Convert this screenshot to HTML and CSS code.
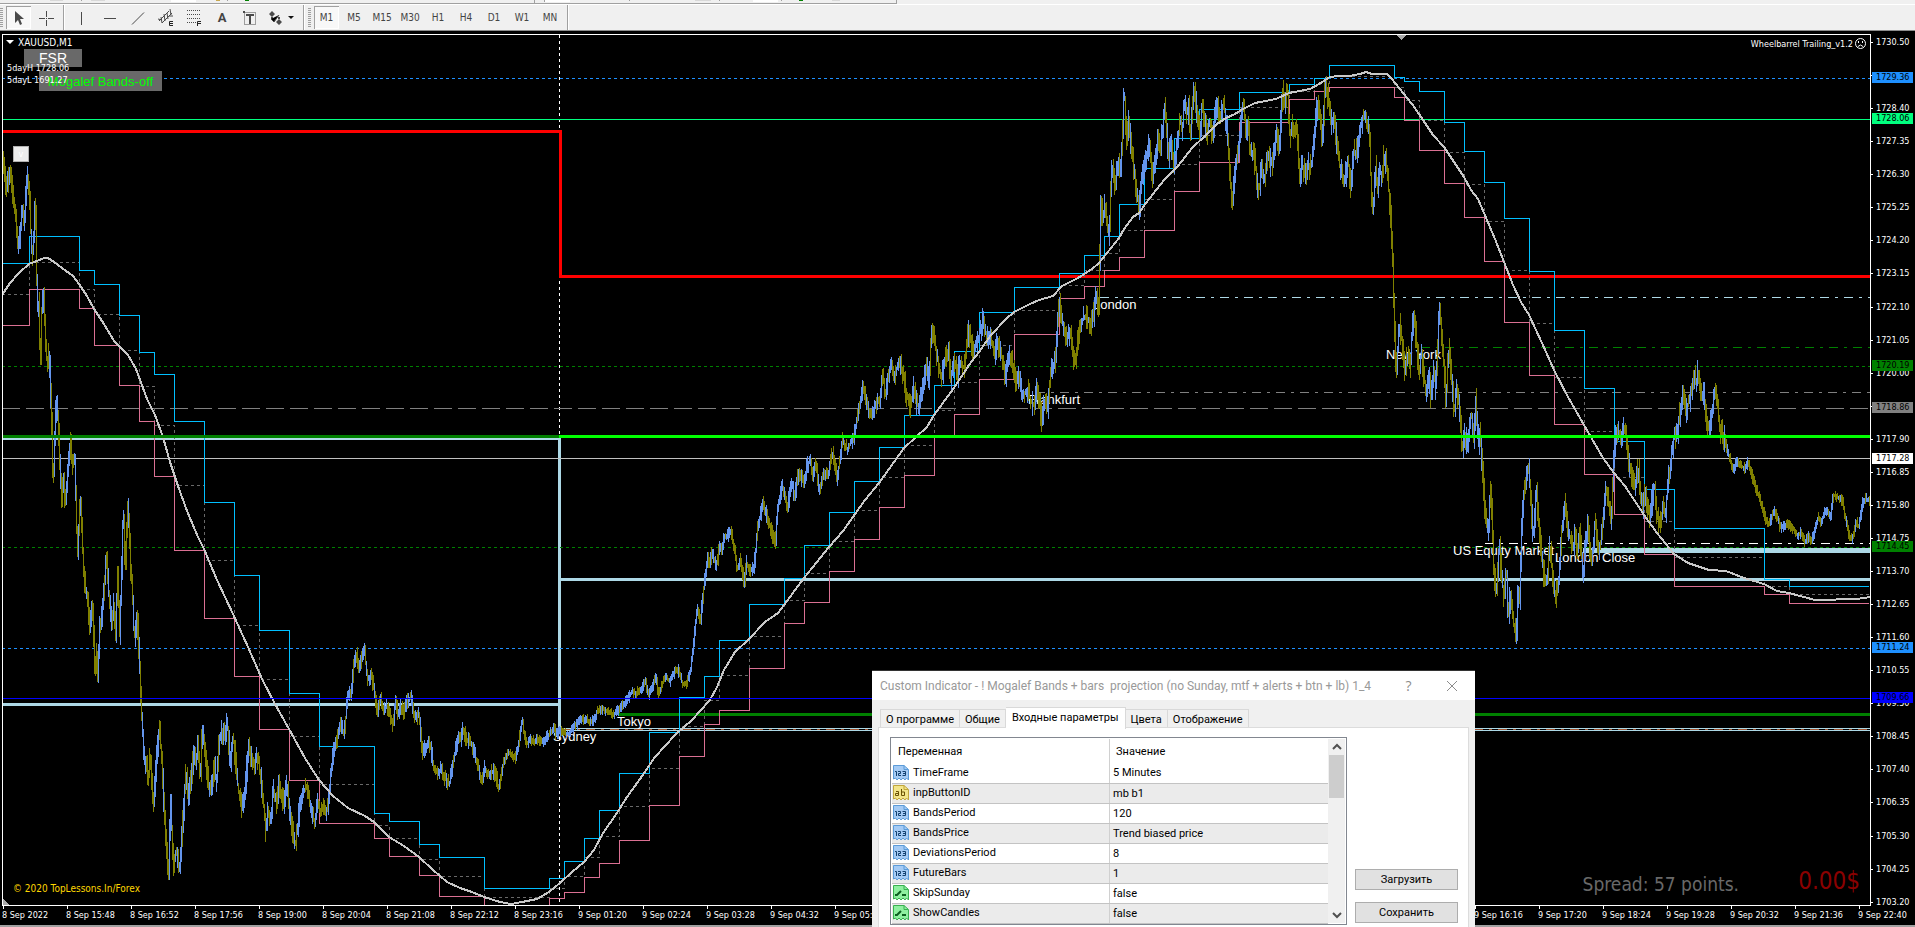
FILE: index.html
```html
<!DOCTYPE html>
<html lang="ru">
<head>
<meta charset="utf-8">
<title>XAUUSD,M1</title>
<link rel="stylesheet" href="styles.css">
</head>
<body>
<header class="bars">
  <div class="strip">
    <svg width="896" height="3" viewBox="0 0 896 3" aria-hidden="true">
      <path fill="#fff" d="M171 0h25v2h-25zM545 0h25v2h-25zM753 0h25v2h-25z"/>
      <path fill="#a0a0a0" d="M81 0h1v1h-1zM227 0h1v1h-1zM534 0h1v3h-1zM544 0h1v2h-1zM629 0h1v1h-1zM719 0h1v1h-1zM781 0h1v1h-1z"/>
      <path fill="#d8d8d8" d="M50 0h13v1h-13zM91 0h14v1h-14zM695 0h16v1h-16zM832 0h8v1h-8z"/>
      <path fill="#008000" d="M245 0h4v1h-4zM799 0h4v1h-4z"/>
      <path fill="#c8a850" d="M216 0h4v1h-4z"/>
    </svg>
  </div>
  <div class="toolbar">
    <span class="grip"></span>
    <button class="tool pressed" aria-label="Cursor"><svg width="16" height="16"><path fill="#4a4a4a" d="M4 1v12l3-3 2 5 2-1-2-5h4z"/></svg></button>
    <button class="tool" aria-label="Crosshair"><svg width="16" height="16"><path stroke="#4a4a4a" d="M8.500 1v6M8.500 10v6M1 8.500h6M10 8.500h6M8 8.500h1"/></svg></button>
    <span class="sep"></span>
    <button class="tool" aria-label="Vertical line"><svg width="16" height="16"><path stroke="#4a4a4a" d="M7.500 2v13"/></svg></button>
    <button class="tool" aria-label="Horizontal line"><svg width="16" height="16"><path stroke="#4a4a4a" d="M2 8.500h12"/></svg></button>
    <button class="tool" aria-label="Trendline"><svg width="16" height="16"><path stroke="#4a4a4a" d="M2 14.500L14 2.500"/></svg></button>
    <button class="tool" aria-label="Equidistant channel"><svg width="16" height="17"><path stroke="#4a4a4a" fill="none" d="M1 12L11 2M4 14L14 4M3 8l1 6M6 5l1 7M9 4l1 6M12 0l1 6M0 10l4 1M11 7h4"/><path stroke="#222" fill="none" d="M15 12.500h-3.500v4H15M12 14.500h3"/></svg></button>
    <button class="tool" aria-label="Fibonacci retracement"><svg width="16" height="17"><path stroke="#4a4a4a" stroke-dasharray="1 1" d="M1 1.500h14M1 5.500h14M1 9.500h14M1 13.500h9"/><path stroke="#222" fill="none" d="M15 12.500h-3.500V17M12 14.500h3"/></svg></button>
    <button class="tool letter">A</button>
    <button class="tool" aria-label="Text label"><svg width="16" height="16"><rect x="2.500" y="2.500" width="11" height="12" fill="none" stroke="#4a4a4a" stroke-dasharray="1 1"/><path fill="#4a4a4a" d="M1 1h2v2h-2zM4 4h8v2h-3v8h-2v-8h-3z"/></svg></button>
    <button class="tool arrows" aria-label="Arrows"><svg width="28" height="16"><path fill="#4a4a4a" d="M4 1l3 3-3 3-3-3zM3 7h2v2h-2zM11 9l3 3-3 3-3-3zM10 7h2v2h-2z"/><path fill="#111" d="M20 6h6l-3 3z"/><path stroke="#4a4a4a" d="M3 9l3 3 5-7"/></svg></button>
    <span class="sep"></span>
    <span class="grip"></span>
    <nav class="frames" id="frames"></nav>
    <span class="sep"></span>
  </div>
</header>

<main class="chart">
  <section class="plot">
    <svg class="canvas" id="canvas" aria-hidden="true"><g id="scene" transform="translate(-3 -35)"></g></svg>
    <div class="note symbol"><i class="drop"></i>XAUUSD,M1</div>
    <button class="tag-btn fsr">FSR</button>
    <button class="tag-btn mogalef">Mogalef Bands-off</button>
    <div class="note days">5dayH 1728.06<br>5dayL 1691.27</div>
    <button class="toggle">v</button>
    <div class="note expert">Wheelbarrel Trailing_v1.2
      <svg width="11" height="11"><circle cx="5.500" cy="5.500" r="5" fill="none" stroke="#fff"/><path stroke="#fff" fill="none" d="M3 8.500q2.500-3 5 0M3.500 3v2M7.500 3v2"/></svg>
    </div>
    <div class="note credit">© 2020 TopLessons.In/Forex</div>
    <div class="spread">Spread: 57 points.</div>
    <div class="profit">0.00$</div>
  </section>
  <aside class="prices" id="prices"></aside>
  <footer class="times" id="times"></footer>
</main>

<section class="dialog" role="dialog" aria-labelledby="dlg-title">
  <div class="titlebar">
    <h1 id="dlg-title">Custom Indicator - ! Mogalef Bands + bars&nbsp; projection (no Sunday, mtf + alerts + btn + lb) 1_4</h1>
    <button class="win help">?</button>
    <button class="win" aria-label="Close"><svg width="12" height="12"><path stroke="#8c8c8c" d="M1 1l10 10M11 1L1 11"/></svg></button>
  </div>
  <div class="tabs" role="tablist">
    <button role="tab">О программе</button><button role="tab">Общие</button><button role="tab" class="active" aria-selected="true">Входные параметры</button><button role="tab">Цвета</button><button role="tab">Отображение</button>
  </div>
  <div class="panel">
    <div class="grid">
      <table>
        <thead><tr><th>Переменная</th><th>Значение</th></tr></thead>
        <tbody id="params"></tbody>
      </table>
      <div class="scroll">
        <svg width="10" height="16"><path fill="none" stroke="#505050" stroke-width="2" d="M1 10l4-4 4 4"/></svg>
        <i class="thumb"></i>
        <svg width="10" height="16"><path fill="none" stroke="#505050" stroke-width="2" d="M1 6l4 4 4-4"/></svg>
      </div>
    </div>
    <div class="actions">
      <button>Загрузить</button>
      <button>Сохранить</button>
    </div>
  </div>
</section>
<script src="chart.js"></script>
</body>
</html>
```
FILE: styles.css
```css
* { box-sizing: border-box; }
body {
  margin: 0;
  height: 100vh;
  display: flex;
  flex-direction: column;
  overflow: hidden;
  background: #000;
  font-family: Roboto, "Liberation Sans", sans-serif;
  font-size: 11px;
}
button { font: inherit; padding: 0; border: 0; background: none; color: inherit; }

/* toolbars */
.bars { background: #f0f0f0; border-bottom: 1px solid #8c8c8c; box-shadow: 0 1px 0 #505050; flex: none; }
.strip { width: 897px; height: 4px; border-bottom: 1px solid #a0a0a0; border-right: 1px solid #a0a0a0; }
.strip svg { display: block; }
.toolbar { height: 26px; display: flex; align-items: stretch; border-top: 1px solid #fff; color: #444; }
.grip { width: 3px; margin: 3px 0; background: repeating-linear-gradient(#a0a0a0 0 1px, #f0f0f0 1px 2px); }
.tool { width: 28px; display: flex; align-items: center; justify-content: center; }
.tool svg { display: block; }
.pressed { background: #f8f8f8; box-shadow: inset 1px 1px 0 #a0a0a0, inset -1px -1px 0 #fff; margin: 1px 1px 1px 3px; width: 25px; }
.letter { font-weight: bold; font-size: 13px; }
.arrows { width: 36px; }
.sep { width: 2px; margin: 0 3px; background: linear-gradient(90deg, #a0a0a0 50%, #fff 50%); }
.frames { display: flex; }
.frames .tool { font: 10px "DejaVu Sans Condensed", sans-serif; }

/* chart */
.chart {
  flex: 1;
  min-height: 0;
  display: grid;
  grid-template-columns: 1fr 44px;
  grid-template-rows: 1fr 21px;
  color: #fff;
  border-top: 1px solid #000;
  font: 9px/12px "DejaVu Sans Condensed", "Noto Sans", sans-serif;
}
.plot { position: relative; overflow: hidden; margin: 2px 0 0 2px; border: 1px solid #fff; }
.canvas { position: absolute; inset: 0; width: 100%; height: 100%; shape-rendering: crispEdges; }
.canvas text { font: 13px "Liberation Sans", Arial, sans-serif; fill: #fff; }
.note { position: absolute; white-space: nowrap; }
.symbol { left: 3px; top: 2px; font-size: 10px; }
.drop { display: inline-block; border: 4px solid transparent; border-top-color: #fff; border-bottom: 0; margin: 0 4px 2px 0; }
.days { left: 4px; top: 27px; }
.tag-btn { position: absolute; background: #696969; color: #fff; font: 14px "Liberation Sans", Arial, sans-serif; }
.fsr { left: 21px; top: 14px; width: 58px; height: 18px; }
.mogalef { left: 36px; top: 36px; width: 123px; height: 20px; color: #0f0; font-size: 13px; }
.toggle { position: absolute; left: 10px; top: 111px; width: 16px; height: 16px; background: #ececec; border: 1px solid #b0b0b0; color: #fff; }
.expert { right: 4px; top: 3px; display: flex; gap: 2px; }
.credit { left: 10px; bottom: 10px; color: #ffd700; font-size: 10px; }
.spread, .profit { position: absolute; }
.spread { right: 131px; bottom: 10px; font-size: 19px; line-height: 22px; color: #696969; }
.profit { right: 10px; bottom: 9px; font-size: 24px; line-height: 30px; color: #8b0000; }

.prices { position: relative; display: flex; flex-direction: column; justify-content: space-between; padding: 4px 0 0; margin-bottom: -2px; }
.prices span { height: 12px; padding-left: 5px; position: relative; }
.prices span::before { content: ""; position: absolute; left: 0; top: 6px; width: 2px; height: 1px; background: #fff; }
.prices b { position: absolute; left: 1px; width: 41px; height: 11px; line-height: 11px; padding-left: 4px; font-weight: normal; color: #000; z-index: 1; }
.times { grid-column: 1 / 3; display: flex; padding-left: 2px; border-bottom: 2px solid #a0a0a0; white-space: nowrap; overflow: hidden; }
.times span { flex: 0 0 64px; padding-top: 3px; position: relative; }
.times span::before { content: ""; position: absolute; left: 1px; top: 0; width: 1px; height: 3px; background: #fff; }

/* dialog */
.dialog { position: absolute; left: 872px; top: 670px; bottom: 0; width: 603px; overflow: hidden; background: #f0f0f0; color: #000; border-top: 1px solid #333; display: flex; flex-direction: column; }
.titlebar { height: 29px; flex: none; background: #fff; display: flex; align-items: center; padding: 0 17px 0 8px; }
.titlebar h1 { margin: 0; flex: 1; font: 12px Roboto, sans-serif; color: #999; white-space: nowrap; }
.win { width: 12px; margin-left: 33px; color: #8c8c8c; display: flex; justify-content: center; }
.help { font: 14px "Open Sans", sans-serif; }
.tabs { display: flex; flex: none; align-items: flex-end; height: 28px; padding-left: 8px; }
.tabs button { height: 19px; padding: 0 5px; border: 1px solid #d9d9d9; border-bottom: 0; border-left-width: 0; white-space: nowrap; }
.tabs button:first-child { border-left-width: 1px; }
.tabs .active { height: 22px; padding: 0 6px 2px; background: #fff; margin-bottom: -1px; position: relative; }
.panel { margin: -1px 6px 0; flex: 1; min-height: 0; background: #fff; border: 1px solid #dcdcdc; border-bottom: 0; display: flex; gap: 8px; padding: 9px 10px 0 11px; }
.grid { flex: 1; height: 188px; border: 1px solid #828790; padding: 1px; display: flex; }
table { flex: 1; border-collapse: collapse; table-layout: fixed; }
th { height: 24px; font-weight: normal; text-align: left; padding: 0 6px; }
th + th, td + td { border-left: 1px solid #d0d0d0; width: 219px; }
td { height: 20px; padding: 0 3px; border-bottom: 1px solid #c3c3c3; }
th:first-child, td:first-child { width: 218px; }
td:first-child { padding-left: 1px; }
td svg { vertical-align: middle; margin-right: 4px; }
tbody tr:nth-child(even) { background: #ebebeb; }
.scroll { width: 17px; background: #f0f0f0; display: flex; flex-direction: column; align-items: center; }
.scroll svg { flex: none; }
.thumb { width: 15px; height: 43px; background: #cdcdcd; margin-bottom: auto; }
.actions { width: 103px; padding-top: 132px; display: flex; flex-direction: column; gap: 12px; }
.actions button { height: 21px; background: #e1e1e1; border: 1px solid #adadad; flex: none; }
```
FILE: chart.js
```js
const NS = "http://www.w3.org/2000/svg";
const scene = document.getElementById("scene");

function draw(tag, attrs, text) {
  const el = document.createElementNS(NS, tag);
  for (const k in attrs) el.setAttribute(k, attrs[k]);
  if (text) el.textContent = text;
  scene.appendChild(el);
}
function stroke(d, color, width, dash) {
  draw("path", { d, fill: "none", stroke: color, "stroke-width": width || 1, "stroke-dasharray": dash || "none" });
}
const FAR = 4000;
const DOT = "3 3", DASHDOT = "9 6 3 6";

/* pivot levels */
stroke("M559.5 35V905", "#fff", 1, DOT);
stroke("M2 439H559", "#add8e6", 2);
stroke("M559.5 438V728", "#add8e6", 3);
stroke("M2 704.5H559M560 579.5H" + FAR, "#add8e6", 3);
stroke("M559 728.5H" + FAR + "M559 730.5H" + FAR, "#add8e6");
stroke("M562 729.5H" + FAR, "#a0522d", 1, DASHDOT);
stroke("M2 131.5H560V276.5H" + FAR, "#f00", 3);
stroke("M618 714.5H" + FAR, "#008000", 3);
stroke("M2 458.5H" + FAR, "#c0c0c0");
stroke("M2 408.5H" + FAR, "#808080", 1, "18 6");
stroke("M2 78.5H" + FAR + "M2 648.5H" + FAR, "#1e90ff", 1, DOT);
stroke("M2 366.5H" + FAR + "M2 547.5H" + FAR, "#008000", 1, DOT);
stroke("M2 119.5H" + FAR, "#00ff7f");
stroke("M1100 297.5H" + FAR, "#add8e6", 1, DASHDOT);
stroke("M1421 347.5H" + FAR, "#008000", 1, DASHDOT);
stroke("M1036 392.5H" + FAR, "#808080", 1, DASHDOT);
stroke("M1485 543.5H" + FAR, "#fff", 1, DASHDOT);
stroke("M1583 550.5H" + FAR, "#add8e6", 5);

/* sessions */
[["Sydney", 553, 741], ["Tokyo", 617, 726], ["Frankfurt", 1028, 404], ["London", 1093, 309],
 ["New York", 1386, 359], ["US Equity Market", 1453, 555], ["London Close", 1555, 562]]
  .forEach(([t, x, y]) => draw("text", { x, y }, t));

/* stepped bands: start x, upper y, lower y */
const bands = [
  [2,263,325],[29,236,289],[79,270,308],[94,284,345],[119,315,385],[139,352,421],[154,374,476],[174,421,550],
  [204,502,618],[234,575,676],[259,630,729],[289,693,780],[319,746,823],[374,813,838],[389,821,856],[419,844,875],
  [439,857,896],[484,888,907],[549,878,898],[564,861,892],[584,838,877],[599,810,863],[619,773,840],[649,732,805],
  [679,697,756],[704,676,724],[719,640,710],[749,604,668],[784,578,623],[804,545,602],[829,512,571],[854,481,539],
  [879,447,507],[904,415,475],[934,385,435],[954,351,414],[979,312,379],[1014,287,334],[1059,273,298],[1084,255,286],
  [1104,236,270],[1119,204,257],[1144,168,230],[1174,138,191],[1199,109,162],[1239,92,122],[1289,84,99],[1314,78,91],
  [1329,65,87],[1394,77,97],[1404,81,120],[1419,91,150],[1444,122,183],[1464,151,217],[1484,182,261],[1504,218,322],
  [1529,271,375],[1554,330,424],[1584,388,474],[1614,441,514],[1644,489,554],[1674,528,586],[1764,579,594],[1789,586,603],
];
function steps(pick) {
  let d = "";
  bands.forEach((b, i) => {
    const y = Math.floor(pick(b)) + 0.5;
    d += (i ? "V" : "M" + b[0] + " ") + y + "H" + (i + 1 < bands.length ? bands[i + 1][0] + 0.5 : 1869);
  });
  return d;
}
stroke(steps(b => (b[1] + b[2]) / 2), "#696969", 1, DOT);
stroke(steps(b => b[1]), "#00bfff");
stroke(steps(b => b[2]), "#db7093");

/* price path, one bar per pixel */
const price = [
  2,148,4,165,6,190,9,175,12,185,14,208,16,220,18,252,20,235,22,205,24,222,27,175,29,190,31,245,33,255,35,195,36,240,37,310,
  39,300,40,385,41,320,43,290,44,310,45,335,47,365,49,350,51,410,52,440,53,495,54,450,56,400,58,420,60,470,62,510,63,470,
  65,510,66,490,68,460,70,440,72,470,74,450,76,500,77,560,79,520,80,490,82,530,83,570,85,590,87,600,90,628,92,600,95,675,
  97,650,98,690,99,620,101,620,104,590,106,555,108,590,111,625,114,600,115,648,118,560,119,648,121,590,123,505,125,570,128,500,
  130,560,132,590,134,640,137,615,139,660,141,705,144,765,146,755,148,778,150,750,153,806,156,765,159,725,162,770,164,810,
  167,860,169,875,170,790,172,840,173,870,176,850,179,872,182,830,184,800,186,770,188,798,191,780,193,755,196,758,198,745,
  200,785,202,725,205,755,208,780,210,796,214,765,216,783,219,738,222,730,225,740,227,722,230,765,233,735,236,770,238,790,
  242,810,245,790,248,748,251,757,255,762,258,758,261,782,264,810,266,834,268,805,270,828,273,790,276,803,279,785,283,803,
  287,783,290,820,295,846,298,820,302,795,306,786,309,800,313,818,315,822,317,798,320,814,323,805,325,816,328,805,330,780,
  332,760,334,747,337,740,340,722,344,735,347,700,349,690,351,693,353,670,356,650,358,668,361,660,364,646,367,680,371,675,
  374,690,377,715,380,697,383,710,387,706,391,722,393,724,395,702,398,714,401,705,403,713,406,702,411,697,414,718,419,716,
  422,755,425,747,430,744,433,765,437,774,441,769,445,779,449,785,452,766,456,747,458,733,461,740,463,727,466,740,470,742,
  473,750,476,760,479,770,481,785,484,767,488,776,492,771,496,775,498,791,502,767,506,756,509,753,512,757,515,759,518,746,
  522,718,524,735,527,744,530,739,534,742,538,739,542,743,547,736,551,731,554,727,556,735,560,731,565,734,570,732,575,726,
  580,721,585,719,592,722,597,712,602,709,608,712,614,714,618,710,622,705,627,700,631,692,635,693,640,690,645,681,648,696,
  656,677,658,696,665,676,669,682,677,668,682,683,686,684,690,673,693,647,697,605,700,622,704,583,707,560,710,567,711,553,
  716,565,720,543,722,551,724,538,731,531,735,555,737,571,740,558,744,586,746,562,749,571,754,565,757,533,762,503,767,517,
  771,530,775,544,778,503,782,485,787,507,792,480,794,499,798,475,804,481,807,465,811,460,812,478,816,465,819,491,824,471,
  828,475,832,450,837,480,842,440,847,449,853,438,855,430,859,405,863,385,867,406,871,418,878,398,880,402,882,370,885,395,
  889,373,892,363,894,381,898,361,902,370,905,387,910,410,913,387,918,408,922,390,926,369,929,379,931,327,935,347,941,379,
  944,363,949,346,950,384,954,360,957,376,960,364,964,368,968,331,973,348,978,338,983,320,987,342,989,332,994,354,997,344,
  1002,358,1005,377,1009,353,1013,370,1015,381,1018,376,1022,395,1027,389,1031,402,1035,406,1036,390,1040,400,1041,430,
  1044,399,1047,413,1050,378,1055,357,1057,333,1059,299,1062,323,1067,339,1070,329,1074,368,1079,329,1084,316,1088,320,
  1092,324,1095,304,1096,294,1099,312,1100,204,1103,220,1105,204,1109,240,1111,173,1113,167,1115,187,1118,160,1120,177,
  1122,147,1124,84,1125,113,1126,140,1129,119,1131,147,1134,173,1136,190,1139,209,1142,174,1146,154,1149,144,1152,180,
  1155,160,1157,140,1160,152,1165,104,1168,160,1170,145,1174,162,1178,140,1180,112,1182,135,1184,100,1187,117,1189,105,
  1190,148,1193,92,1195,94,1197,116,1200,132,1202,101,1205,125,1207,135,1209,119,1213,138,1215,113,1218,108,1221,116,1223,102,
  1227,127,1229,168,1232,205,1234,180,1238,150,1240,129,1243,101,1246,129,1248,122,1250,154,1253,151,1256,172,1257,187,
  1260,187,1261,163,1264,178,1268,155,1271,165,1274,153,1276,127,1279,148,1282,90,1285,107,1287,85,1290,145,1291,123,
  1294,132,1297,124,1299,183,1302,163,1305,180,1307,165,1311,166,1314,140,1317,101,1320,117,1322,139,1325,87,1328,98,
  1331,125,1334,114,1337,150,1340,169,1344,183,1348,160,1351,195,1353,150,1356,155,1360,129,1363,114,1369,127,1371,188,
  1373,215,1375,161,1377,189,1380,168,1381,180,1384,154,1386,163,1390,207,1392,247,1394,313,1396,378,1399,322,1402,343,
  1405,373,1407,352,1410,367,1412,325,1414,318,1417,350,1419,379,1421,350,1424,380,1426,393,1428,372,1431,399,1434,366,
  1435,396,1438,337,1439,303,1442,343,1444,372,1446,402,1448,348,1452,380,1454,418,1456,386,1459,407,1462,450,1464,432,
  1467,450,1471,410,1474,446,1475,393,1478,446,1480,432,1483,483,1485,515,1488,535,1490,487,1492,517,1493,560,1496,598,
  1499,542,1501,575,1504,598,1506,562,1508,623,1510,592,1512,613,1516,643,1518,583,1520,605,1521,530,1523,500,1525,485,
  1528,463,1531,507,1533,542,1536,488,1538,517,1540,545,1543,570,1546,588,1550,541,1552,575,1555,600,1559,577,1561,535,
  1565,502,1568,538,1570,537,1573,550,1575,533,1577,550,1579,530,1581,550,1583,578,1585,542,1588,524,1590,562,1593,548,
  1595,521,1598,548,1600,547,1603,517,1605,487,1608,500,1611,526,1613,467,1615,443,1617,427,1621,438,1624,424,1626,437,
  1629,467,1631,472,1635,484,1638,467,1641,502,1643,508,1645,495,1650,516,1654,481,1656,510,1660,529,1663,503,1665,516,
  1668,480,1672,450,1674,435,1677,437,1679,417,1683,393,1686,416,1687,407,1690,397,1694,373,1696,382,1698,371,1701,397,
  1704,392,1705,415,1709,430,1712,412,1714,392,1717,402,1720,431,1723,434,1726,447,1730,460,1733,469,1737,460,1741,466,
  1745,468,1748,461,1752,477,1757,492,1762,507,1766,522,1770,522,1773,510,1777,517,1780,528,1787,524,1792,527,1797,535,
  1801,533,1805,543,1809,536,1811,543,1815,530,1818,517,1821,522,1825,509,1830,518,1833,495,1838,497,1842,500,1846,523,
  1849,535,1852,540,1856,519,1858,530,1862,504,1865,498,1869,500,
];
let k = 0;
function priceAt(x) {
  while (k + 2 < price.length - 2 && price[k + 2] < x) k += 2;
  while (k > 0 && price[k] > x) k -= 2;
  const t = (x - price[k]) / (price[k + 2] - price[k]);
  return price[k + 1] + t * (price[k + 3] - price[k + 1]);
}
let seed = 7;
const rnd = () => (seed = (seed * 16807) % 2147483647) / 2147483647;
let up = "", down = "";
for (let x = 3; x < 1870; x++) {
  const a = priceAt(x - 0.5), b = priceAt(x + 0.5);
  const calm = x > 500 && x < 700 || x > 1725 ? 5 : x > 300 && x < 900 ? 8 : 13;
  const top = Math.round(Math.min(a, b) - 1 - rnd() * calm);
  const bottom = Math.round(Math.max(a, b) + 1 + rnd() * calm);
  const seg = "M" + (x + 0.5) + " " + top + "V" + bottom;
  const rising = rnd() < 0.22 ? b > a : b < a;
  if (rising) up += seg; else down += seg;
}
stroke(down, "#808000");
stroke(up, "#6495ed");

/* centre line */
const centre = [
  2,295,10,283,19,273,29,264,37,261,44,258,48,258,54,262,62,268,73,276,79,284,87,296,94,309,104,324,114,341,119,346,128,355,
  136,369,139,377,147,399,155,415,163,437,170,462,178,486,187,511,198,537,204,549,217,580,233,614,248,647,262,679,275,704,
  289,729,305,758,319,780,333,796,348,808,365,816,374,822,389,837,404,846,419,857,433,870,447,882,460,888,472,892,484,897,
  500,902,511,904,522,902,537,899,549,892,560,883,572,872,584,862,594,850,603,833,615,816,627,797,640,779,655,757,675,735,
  692,720,710,700,717,687,724,670,735,652,749,639,765,622,778,613,784,605,804,578,829,547,843,531,865,500,879,483,904,448,
  927,427,934,415,954,388,969,365,979,352,991,335,1006,319,1014,312,1028,305,1039,300,1053,296,1062,286,1078,278,1092,269,
  1099,263,1119,238,1124,229,1133,217,1139,213,1146,203,1164,180,1178,166,1192,148,1206,135,1217,124,1226,118,1235,114,
  1243,109,1255,103,1276,99,1289,93,1310,89,1319,84,1330,77,1339,76,1349,76,1360,74,1366,72,1372,74,1387,74,1392,79,1403,93,
  1412,104,1419,114,1433,135,1444,147,1464,177,1471,190,1478,199,1484,213,1495,239,1504,262,1513,285,1521,302,1529,315,
  1542,343,1554,370,1568,397,1584,425,1603,458,1614,473,1625,486,1644,515,1657,533,1674,554,1688,563,1709,570,1726,571,
  1744,578,1764,584,1777,591,1789,593,1815,600,1857,599,1870,597,
];
draw("polyline", { points: centre.join(" "), fill: "none", stroke: "#c8c8c8", "stroke-width": 2 });

stroke("M2 698.5H" + FAR, "#00f");
stroke("M2 436.5H559", "#008000", 3);
stroke("M559 436.5H" + FAR, "#0f0", 3);
draw("path", { d: "M1397 35h9l-4.500 5zM3 905v-6l6 6z", fill: "#a9a9a9" });

/* price scale */
const prices = document.getElementById("prices");
for (let i = 0; i < 27; i++) {
  const s = document.createElement("span");
  const v = (1730.5 - i * 1.05).toFixed(2);
  if (v !== "1729.45" && v !== "1718.95") s.textContent = v;
  prices.appendChild(s);
}
[["1729.36", 77, "#1e90ff"], ["1728.06", 118, "#00ff7f"], ["1720.19", 365, "#008000"], ["1718.86", 407, "#808080"],
 ["1717.28", 458, "#fff"], ["1714.45", 546, "#008000"], ["1711.24", 647, "#1e90ff"], ["1709.66", 697, "#00f"]]
  .forEach(([t, y, c]) => {
    const b = document.createElement("b");
    b.textContent = t;
    b.style.top = y - 37 + "px";
    b.style.background = c;
    prices.appendChild(b);
  });

/* time scale */
const times = document.getElementById("times");
for (let i = 0; i < 30; i++) {
  const m = 14 * 60 + 44 + i * 64 + (i > 8 ? 60 : 0);
  const hm = [Math.floor(m / 60) % 24, m % 60].map(n => String(n).padStart(2, "0")).join(":");
  const s = document.createElement("span");
  s.textContent = i ? (m >= 1440 ? "9" : "8") + " Sep " + hm : "8 Sep 2022";
  times.appendChild(s);
}

/* timeframes */
document.getElementById("frames").innerHTML = ["M1", "M5", "M15", "M30", "H1", "H4", "D1", "W1", "MN"]
  .map((t, i) => `<button class="tool${i ? "" : " pressed"}">${t}</button>`).join("");

/* parameter rows */
const sheet = (fill, edge, inner) =>
  `<svg width="16" height="16"><path fill="${fill}" stroke="${edge}" d="M.5.5h10.500l4.500 4v10.500l-2-2-1.500 2-2-2-2 2-2-2-2 2-1.500-2-2 1z"/><path fill="none" stroke="${edge}" d="M11 .5v4h4"/>${inner}</svg>`;
const icons = {
  num: sheet("#a5cbf5", "#5b9bd8", '<path fill="none" stroke="#12406e" d="M2 6.500h1.500V11M5 6.500h2.500v2h-2v2H8M9.500 6.500h3v4h-3M10 8.500h2.500"/>'),
  str: sheet("#f3e58a", "#c0a63c", '<path fill="none" stroke="#6b5205" d="M3 6.500h2.500v4h-3v-2H5M8.500 4v6.500h3v-3.500H9"/>'),
  bool: sheet("#8ff0a0", "#38b050", '<path fill="none" stroke="#0c6020" stroke-width="2" d="M2 10h2l4-4M9 10h4"/>'),
};
document.getElementById("params").innerHTML = [
  ["num", "TimeFrame", "5 Minutes"], ["str", "inpButtonID", "mb b1"], ["num", "BandsPeriod", "120"],
  ["num", "BandsPrice", "Trend biased price"], ["num", "DeviationsPeriod", "8"], ["num", "FutureBars", "1"],
  ["bool", "SkipSunday", "false"], ["bool", "ShowCandles", "false"],
].map(r => `<tr><td>${icons[r[0]]}${r[1]}</td><td>${r[2]}</td></tr>`).join("");
```
